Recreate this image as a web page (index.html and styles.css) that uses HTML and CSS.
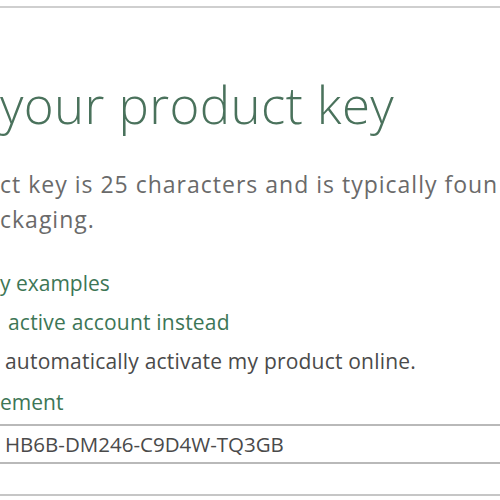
FILE: index.html
```html
<!DOCTYPE html>
<html lang="en">
<head>
    <meta charset="UTF-8">
    <title>Enter your product key</title>
    <link rel="stylesheet" href="styles.css">
</head>
<body>
    <div class="frame">
        <div class="dialog">
            <h1 class="title">your product key</h1>
            <p class="intro">ct key is 25 characters and is typically foun<br>ckaging.</p>

            <a class="link examples" href="#">y examples</a>
            <a class="link account" href="#">active account instead</a>

            <label class="check">automatically activate my product online.</label>

            <a class="link agreement" href="#">ement</a>

            <div class="key-field">
                <input type="text" class="key-input" value="HB6B-DM246-C9D4W-TQ3GB">
            </div>
            <div class="next-row"></div>
        </div>
    </div>
</body>
</html>
```

FILE: styles.css
```css
* {
    margin: 0;
    padding: 0;
    box-sizing: border-box;
}

body {
    background: #fff;
    overflow: hidden;
    font-family: 'Open Sans', 'Noto Sans', sans-serif;
}

.frame {
    margin-top: 6px;
    border-top: 2px solid #cfcfcf;
    height: 494px;
    overflow: hidden;
}

.dialog {
    display: flex;
    flex-direction: column;
    align-items: flex-start;
}

.title {
    margin-top: 66px;
    font-size: 51px;
    font-weight: 300;
    line-height: 60px;
    letter-spacing: 0.4px;
    color: #4a725c;
    white-space: nowrap;
}

.intro {
    margin-top: 33px;
    font-size: 23px;
    line-height: 35px;
    letter-spacing: 1px;
    color: #6a6a6a;
    white-space: nowrap;
}

.link {
    font-size: 21px;
    line-height: 39px;
    color: #3d7656;
    text-decoration: none;
    white-space: nowrap;
}

.examples {
    margin-top: 27px;
}

.account {
    padding-left: 8px;
    letter-spacing: 0.2px;
}

.check {
    padding-left: 5px;
    font-size: 21px;
    line-height: 39px;
    letter-spacing: 0.2px;
    color: #4a4a4a;
    white-space: nowrap;
}

.agreement {
    margin-top: 2px;
}

.key-field {
    margin-top: 2px;
    width: 100%;
    border-top: 2px solid #b9b9b9;
    border-bottom: 2px solid #b9b9b9;
}

.key-input {
    display: block;
    width: 100%;
    height: 36px;
    border: none;
    outline: none;
    padding-left: 5px;
    font-family: 'Open Sans', 'Noto Sans', sans-serif;
    font-size: 20.5px;
    color: #4a4a4a;
    background: #fff;
}

.next-row {
    margin-top: 30px;
    width: 100%;
    border-top: 2px solid #c6c6c6;
}
```
